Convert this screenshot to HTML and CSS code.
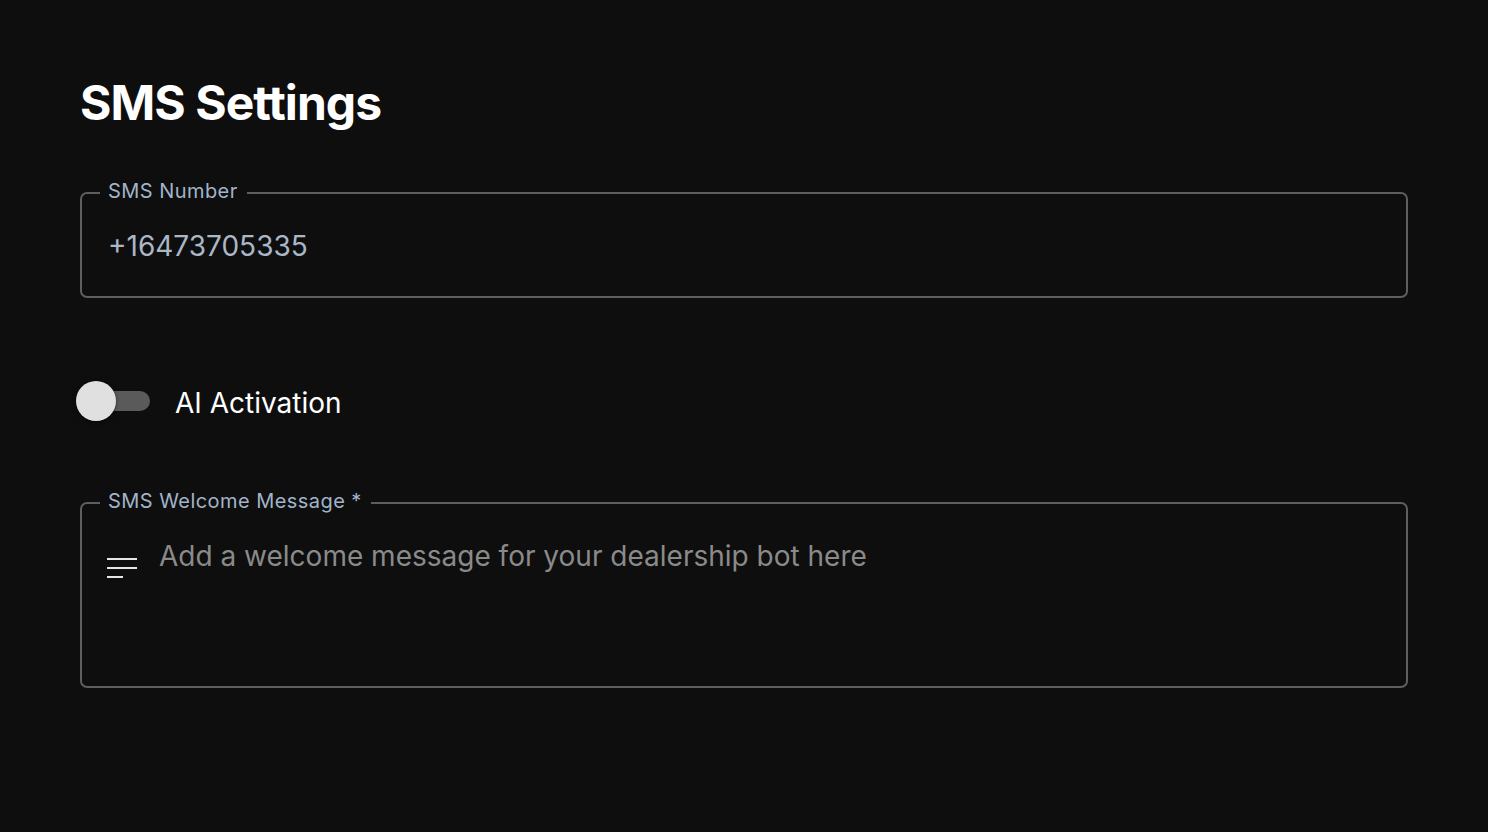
FILE: index.html
```html
<!DOCTYPE html>
<html lang="en">
<head>
<meta charset="utf-8">
<title>SMS Settings</title>
<link rel="stylesheet" href="styles.css">
</head>
<body>
<main class="page">
  <h1 class="title">SMS Settings</h1>

  <fieldset class="field field-number">
    <legend class="field-label">SMS Number</legend>
    <input class="field-input" type="text" value="+16473705335">
  </fieldset>

  <label class="toggle-row">
    <span class="toggle">
      <span class="toggle-track"></span>
      <span class="toggle-thumb"></span>
    </span>
    <span class="toggle-label">AI Activation</span>
  </label>

  <fieldset class="field field-message">
    <legend class="field-label">SMS Welcome Message<span class="required">*</span></legend>
    <div class="message-row">
      <svg class="message-icon" width="30" height="22" viewBox="0 0 30 22" aria-hidden="true">
        <rect x="0" y="1" width="30" height="2" fill="#e6e6e6"/>
        <rect x="0" y="10" width="30" height="2" fill="#e6e6e6"/>
        <rect x="0" y="19" width="16" height="2" fill="#e6e6e6"/>
      </svg>
      <textarea class="message-input" rows="3" placeholder="Add a welcome message for your dealership bot here"></textarea>
    </div>
  </fieldset>
</main>
</body>
</html>
```

FILE: styles.css
```css
html, body {
  margin: 0;
  padding: 0;
  background: #0e0e0e;
}

body {
  font-family: Inter, "Noto Sans", "Liberation Sans", sans-serif;
  color: #ffffff;
  min-height: 832px;
}

.page {
  padding: 74px 80px 0 80px;
  display: flex;
  flex-direction: column;
}

.title {
  margin: 0;
  font-size: 48px;
  font-weight: 700;
  line-height: 58px;
  letter-spacing: -0.95px;
  color: #ffffff;
}

.field {
  margin: 0;
  border: 2px solid #5e5e5e;
  border-radius: 7px;
  padding: 24px 26px 33px 26px;
  min-width: 0;
}

.field-number {
  margin-top: 49px;
}

.field-label {
  font-size: 20px;
  line-height: 20px;
  letter-spacing: 0.45px;
  color: #a2b4ca;
  padding: 0 9px 4px 8px;
  margin-left: -8px;
}

.required {
  margin-left: 6px;
}

.field-input {
  display: block;
  width: 100%;
  box-sizing: border-box;
  margin: 0;
  padding: 0;
  border: none;
  outline: none;
  background: transparent;
  font-family: inherit;
  font-size: 28px;
  line-height: 34px;
  height: 34px;
  color: #aab7c7;
}

.toggle-row {
  display: flex;
  align-items: center;
  gap: 25px;
  margin-top: 83px;
  margin-left: -4px;
  cursor: pointer;
}

.toggle {
  position: relative;
  width: 74px;
  height: 40px;
  flex: none;
}

.toggle-track {
  position: absolute;
  left: 20px;
  top: 10px;
  width: 54px;
  height: 20px;
  border-radius: 10px;
  background: #5a5a5a;
}

.toggle-thumb {
  position: absolute;
  left: 0;
  top: 0;
  width: 40px;
  height: 40px;
  border-radius: 50%;
  background: #e0e0e0;
  box-shadow: 0 1px 4px rgba(0, 0, 0, 0.5);
}

.toggle-label {
  font-size: 28px;
  line-height: 34px;
  color: #ffffff;
  padding-top: 3px;
}

.field-message {
  margin-top: 70px;
  padding-bottom: 33px;
}

.message-row {
  display: flex;
  align-items: flex-start;
  gap: 22px;
  margin-left: -1px;
}

.message-icon {
  flex: none;
  margin-top: 18px;
}

.message-input {
  flex: 1;
  display: block;
  margin: 0;
  padding: 0;
  border: none;
  outline: none;
  resize: none;
  overflow: hidden;
  background: transparent;
  font-family: inherit;
  font-size: 28px;
  line-height: 34px;
  height: 114px;
  color: #cfcfcf;
}

.message-input::placeholder {
  color: #8a8a8a;
  opacity: 1;
}
```
